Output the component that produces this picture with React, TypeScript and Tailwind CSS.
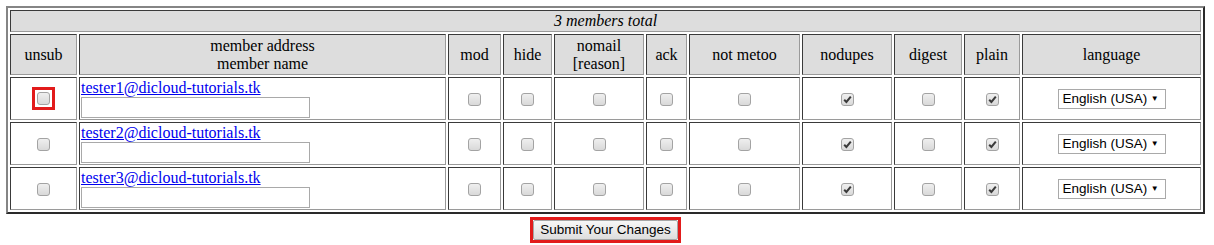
import React from "react";

type Member = { email: string };

const members: Member[] = [
  { email: "tester1@dicloud-tutorials.tk" },
  { email: "tester2@dicloud-tutorials.tk" },
  { email: "tester3@dicloud-tutorials.tk" },
];

// inset cell border, like an old border=2 html table
const cell =
  "border border-t-[#3a3a3a] border-l-[#3a3a3a] border-r-[#9a9a9a] border-b-[#9a9a9a] p-px align-middle";
const head = `${cell} bg-[#dddddd] text-center font-normal`;

const widths = [
  "w-[67px]",
  "w-[367px]",
  "w-[53px]",
  "w-[49px]",
  "w-[90px]",
  "w-[41px]",
  "w-[111px]",
  "w-[90px]",
  "w-[68px]",
  "w-[56px]",
  "w-[179px]",
];

function Box({ checked = false }: { checked?: boolean }) {
  return (
    <span className="relative inline-block h-[13px] w-[13px] rounded-[3px] border border-[#a3a3a3] bg-linear-to-b from-[#efefef] to-[#d9d9d9] align-middle">
      {checked && (
        <svg viewBox="0 0 13 13" className="absolute -left-px -top-px h-[13px] w-[13px]">
          <path d="M3.2 6.8 L5.4 9 L9.8 3.6" fill="none" stroke="#3a3a3a" strokeWidth="2" />
        </svg>
      )}
    </span>
  );
}

function Language() {
  return (
    <span className="inline-flex h-[20px] w-[108px] items-center justify-between border border-[#a9a9a9] bg-white pl-[4px] pr-[6px] align-middle font-['Liberation_Sans',Arial,sans-serif] text-[13.5px] leading-none text-black">
      <span>English (USA)</span>
      <span className="text-[8px]">▼</span>
    </span>
  );
}

export default function App() {
  return (
    <div className="min-h-[245px] bg-white pt-[6px] font-['Liberation_Serif','Times_New_Roman',serif] text-[16px] leading-[18px] text-black">
      <div className="ml-[6px] w-[1199px]">
        <table className="w-[1199px] table-fixed border-separate border-spacing-[2px] border-2 border-t-[#858585] border-l-[#858585] border-r-[#2a2a2a] border-b-[#2a2a2a]">
          <colgroup>
            {widths.map((w, i) => (
              <col key={i} className={w} />
            ))}
          </colgroup>
          <tbody>
            <tr>
              <td colSpan={11} className={`${head} italic`}>
                3 members total
              </td>
            </tr>
            <tr className="h-[41px]">
              <th className={head}>unsub</th>
              <th className={head}>
                member address
                <br />
                member name
              </th>
              <th className={head}>mod</th>
              <th className={head}>hide</th>
              <th className={head}>
                nomail
                <br />
                [reason]
              </th>
              <th className={head}>ack</th>
              <th className={head}>not metoo</th>
              <th className={head}>nodupes</th>
              <th className={head}>digest</th>
              <th className={head}>plain</th>
              <th className={head}>language</th>
            </tr>
            {members.map((m, i) => (
              <tr key={m.email}>
                <td className={`${cell} text-center`}>
                  {i === 0 ? (
                    <span className="inline-flex border-[3px] border-[#e21b1b] p-[2px] align-middle">
                      <Box />
                    </span>
                  ) : (
                    <Box />
                  )}
                </td>
                <td className={cell}>
                  <div>
                    <a href="#" className="text-[#0000ee] underline">
                      {m.email}
                    </a>
                  </div>
                  <input
                    type="text"
                    className="block h-[21px] w-[229px] border border-[#a9a9a9] bg-white"
                  />
                </td>
                <td className={`${cell} text-center`}>
                  <Box />
                </td>
                <td className={`${cell} text-center`}>
                  <Box />
                </td>
                <td className={`${cell} text-center`}>
                  <Box />
                </td>
                <td className={`${cell} text-center`}>
                  <Box />
                </td>
                <td className={`${cell} text-center`}>
                  <Box />
                </td>
                <td className={`${cell} text-center`}>
                  <Box checked />
                </td>
                <td className={`${cell} text-center`}>
                  <Box />
                </td>
                <td className={`${cell} text-center`}>
                  <Box checked />
                </td>
                <td className={`${cell} text-center`}>
                  <Language />
                </td>
              </tr>
            ))}
          </tbody>
        </table>
        <div className="mt-[3px] flex justify-center">
          <span className="inline-flex border-[3px] border-[#e21b1b]">
            <button
              type="button"
              className="h-[20px] w-[145px] rounded-[2px] border border-[#a6a6a6] bg-linear-to-b from-[#f7f7f7] to-[#dddddd] font-['Liberation_Sans',Arial,sans-serif] text-[13.5px] leading-none text-black"
            >
              Submit Your Changes
            </button>
          </span>
        </div>
      </div>
    </div>
  );
}
